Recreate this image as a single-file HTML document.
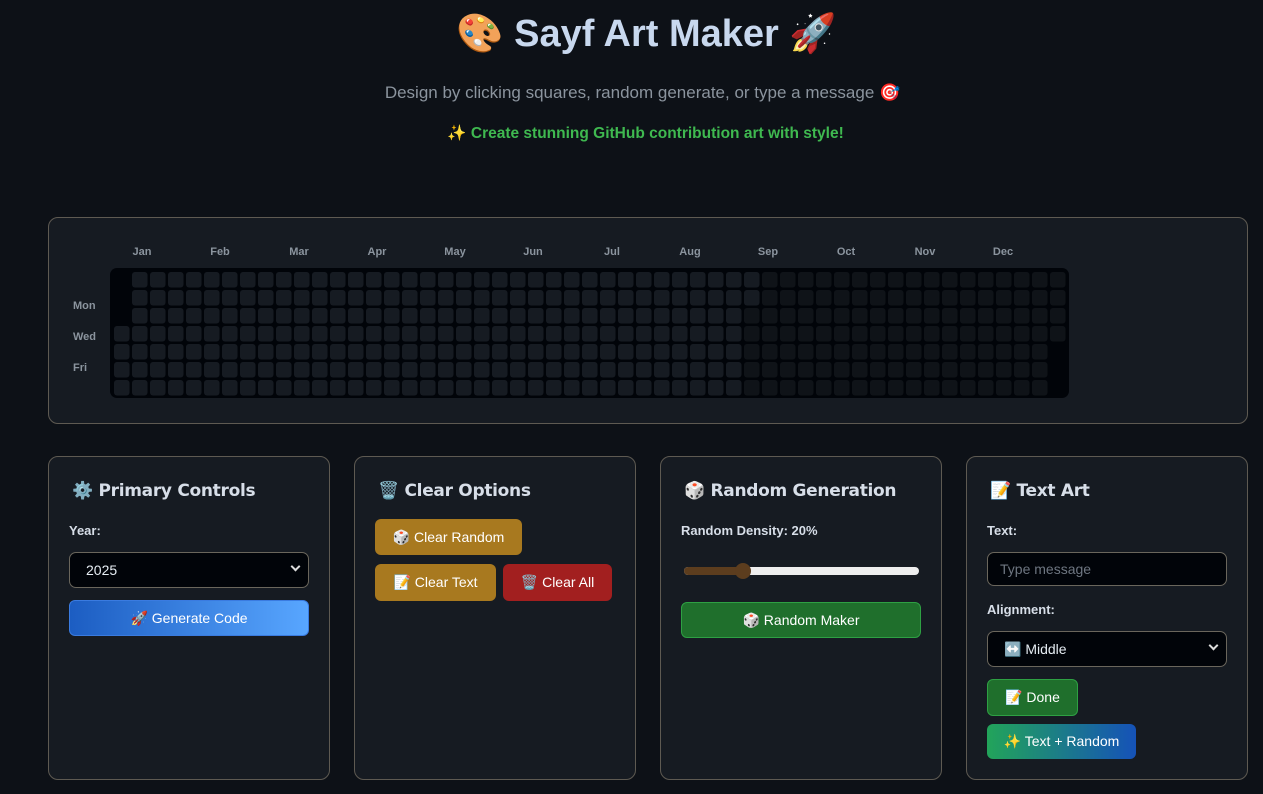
<!DOCTYPE html>
<html><head><meta charset="utf-8"><style>
*{box-sizing:border-box;margin:0;padding:0}
body{width:1263px;height:794px;overflow:hidden;background:#0d1117;font-family:"Liberation Sans","DejaVu Sans","Noto Sans CJK SC",sans-serif;color:#c9d1d9;position:relative}
.a{position:absolute}
.c{text-align:center;width:100%;left:0}
.panel{position:absolute;background:#161b22;border:1px solid #5e5a52;border-radius:10px}
.h{position:absolute;font-size:17px;font-weight:bold;color:#d7dee8;font-family:"DejaVu Sans","Liberation Sans",sans-serif;letter-spacing:-0.3px}
.lb{position:absolute;font-size:13px;font-weight:bold;color:#d7dee8}
.btn{position:absolute;border-radius:6px;color:#fff;font-size:14px;display:flex;align-items:center;justify-content:center;gap:6px}
.sel{position:absolute;background:#010409;border:1px solid #6a665c;border-radius:7px;color:#e6edf3;font-size:14px;display:flex;align-items:center;padding-left:16px}
.chev{position:absolute;right:9px;top:10px;width:7px;height:7px;border-right:2px solid #ddd;border-bottom:2px solid #ddd;transform:rotate(45deg)}
.m{position:absolute;top:246px;font-size:11px;font-weight:bold;color:#8b949e;transform:translateX(-50%)}
.d{position:absolute;left:73px;font-size:11px;font-weight:bold;color:#8b949e}
</style></head><body>
<div class="a c" style="top:12px;font-size:38px;font-weight:bold;color:#c8d8ee;padding-left:30px">🎨 Sayf Art Maker 🚀</div>
<div class="a c" style="top:83px;font-size:17px;color:#8b949e;padding-left:22px">Design by clicking squares, random generate, or type a message 🎯</div>
<div class="a c" style="top:124px;font-size:15.5px;font-weight:bold;color:#3fb950;padding-left:28px">✨ Create stunning GitHub contribution art with style!</div>

<div class="panel" style="left:48px;top:217px;width:1200px;height:207px"></div>
<div class="m" style="left:142px">Jan</div><div class="m" style="left:220px">Feb</div><div class="m" style="left:299px">Mar</div><div class="m" style="left:377px">Apr</div><div class="m" style="left:455px">May</div><div class="m" style="left:533px">Jun</div><div class="m" style="left:612px">Jul</div><div class="m" style="left:690px">Aug</div><div class="m" style="left:768px">Sep</div><div class="m" style="left:846px">Oct</div><div class="m" style="left:925px">Nov</div><div class="m" style="left:1003px">Dec</div>
<div class="d" style="top:300px">Mon</div><div class="d" style="top:331px">Wed</div><div class="d" style="top:362px">Fri</div>
<svg class="a" style="left:110px;top:268px" width="959" height="130">
<defs>
<pattern id="p1" x="4" y="4" width="18" height="18" patternUnits="userSpaceOnUse"><rect width="15.5" height="15.5" rx="3" fill="#161b22"/></pattern>
<pattern id="p2" x="4" y="4" width="18" height="18" patternUnits="userSpaceOnUse"><rect width="15.5" height="15.5" rx="3" fill="#0f1318"/></pattern>
</defs>
<rect width="959" height="130" rx="7" fill="#010409"/>
<rect x="4" y="4" width="630" height="126" fill="url(#p1)"/>
<rect x="634" y="4" width="18" height="36" fill="url(#p1)"/>
<rect x="634" y="40" width="18" height="90" fill="url(#p2)"/>
<rect x="652" y="4" width="304" height="126" fill="url(#p2)"/>
<rect x="2" y="2" width="18" height="56" fill="#010409"/>
<rect x="938" y="76" width="19" height="52" fill="#010409"/>
</svg>

<div class="panel" style="left:48px;top:456px;width:282px;height:324px"></div>
<div class="h" style="left:72px;top:481px">⚙️ Primary Controls</div>
<div class="lb" style="left:69px;top:523px">Year:</div>
<div class="sel" style="left:69px;top:552px;width:240px;height:36px">2025<span class="chev"></span></div>
<div class="btn" style="left:69px;top:600px;width:240px;height:36px;background:linear-gradient(90deg,#1c5dc2,#58a6ff);border:1px solid #3a7be0">🚀 Generate Code</div>

<div class="panel" style="left:354px;top:456px;width:282px;height:324px"></div>
<div class="h" style="left:378px;top:481px">🗑️ Clear Options</div>
<div class="btn" style="left:375px;top:519px;width:147px;height:36px;background:#a8791f">🎲 Clear Random</div>
<div class="btn" style="left:375px;top:564px;width:121px;height:37px;background:#a8791f">📝 Clear Text</div>
<div class="btn" style="left:503px;top:564px;width:109px;height:37px;background:#a21f1f">🗑️ Clear All</div>

<div class="panel" style="left:660px;top:456px;width:282px;height:324px"></div>
<div class="h" style="left:684px;top:481px">🎲 Random Generation</div>
<div class="lb" style="left:681px;top:523px">Random Density: 20%</div>
<div class="a" style="left:684px;top:567px;width:235px;height:8px;border-radius:4px;background:#eee"></div>
<div class="a" style="left:684px;top:567px;width:60px;height:8px;border-radius:4px;background:#5c3d1e"></div>
<div class="a" style="left:735px;top:563px;width:16px;height:16px;border-radius:50%;background:#5c3d1e"></div>
<div class="btn" style="left:681px;top:602px;width:240px;height:36px;background:#1f6f2c;border:1px solid #2ea043">🎲 Random Maker</div>

<div class="panel" style="left:966px;top:456px;width:282px;height:324px"></div>
<div class="h" style="left:990px;top:481px">📝 Text Art</div>
<div class="lb" style="left:987px;top:523px">Text:</div>
<div class="sel" style="left:987px;top:552px;width:240px;height:34px;color:#6e7681;padding-left:12px">Type message</div>
<div class="lb" style="left:987px;top:602px">Alignment:</div>
<div class="sel" style="left:987px;top:631px;width:240px;height:36px">↔️ Middle<span class="chev"></span></div>
<div class="btn" style="left:987px;top:679px;width:91px;height:37px;background:#1f6f2c;border:1px solid #2ea043">📝 Done</div>
<div class="btn" style="left:987px;top:724px;width:149px;height:35px;background:linear-gradient(90deg,#22a45a,#1552b8)">✨ Text + Random</div>
</body></html>
